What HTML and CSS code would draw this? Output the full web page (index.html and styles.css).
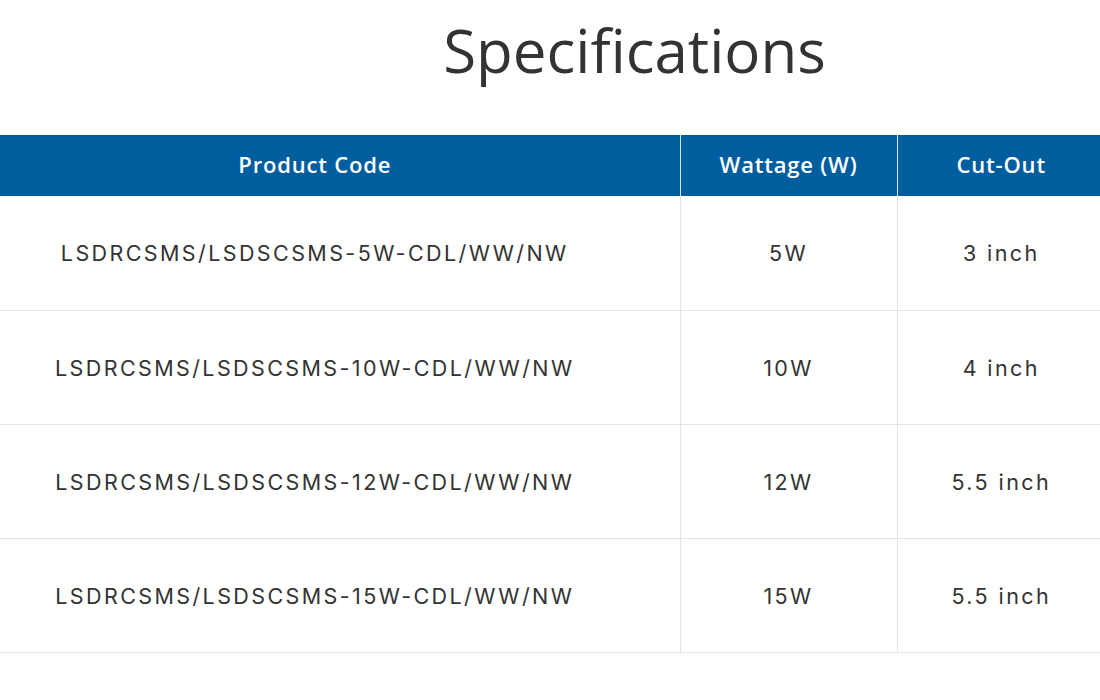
FILE: index.html
```html
<!DOCTYPE html>
<html>
<head>
<meta charset="utf-8">
<link rel="stylesheet" href="styles.css">
</head>
<body>
<div class="page">
  <h1 class="title">Specifications</h1>
  <table class="spec">
    <thead>
      <tr>
        <th class="c1">Product Code</th>
        <th class="c2">Wattage (W)</th>
        <th class="c3">Cut-Out</th>
      </tr>
    </thead>
    <tbody>
      <tr><td>LSDRCSMS/LSDSCSMS-5W-CDL/WW/NW</td><td>5W</td><td>3 inch</td></tr>
      <tr><td>LSDRCSMS/LSDSCSMS-10W-CDL/WW/NW</td><td>10W</td><td>4 inch</td></tr>
      <tr><td>LSDRCSMS/LSDSCSMS-12W-CDL/WW/NW</td><td>12W</td><td>5.5 inch</td></tr>
      <tr><td>LSDRCSMS/LSDSCSMS-15W-CDL/WW/NW</td><td>15W</td><td>5.5 inch</td></tr>
    </tbody>
  </table>
</div>
</body>
</html>
```
FILE: styles.css
```css
html, body {
  margin: 0;
  padding: 0;
  background: #ffffff;
  overflow: hidden;
}
.page {
  margin-left: -50px;
  width: 1155px;
  font-family: "Open Sans", "Liberation Sans", sans-serif;
  color: #333333;
}
.title {
  margin: 0;
  padding: 12px 0 0 214px;
  height: 135px;
  box-sizing: border-box;
  text-align: center;
  font-family: "Open Sans", "Liberation Sans", sans-serif;
  font-weight: 400;
  font-size: 60px;
  line-height: 76px;
  letter-spacing: 0;
  color: #333333;
}
.spec {
  width: 100%;
  border-collapse: collapse;
  table-layout: fixed;
}
.spec th {
  background: #005e9f;
  color: #ffffff;
  font-weight: 600;
  font-size: 22px;
  letter-spacing: 0.8px;
  height: 61px;
  padding: 0 0 3px 0;
  box-sizing: border-box;
  border-left: 1px solid #d6e3ee;
  text-align: center;
}
.spec th:first-child { border-left: none; }
.c1 { width: 730px; }
.c2 { width: 217px; }
.c3 { width: auto; }
.spec td {
  height: 113px;
  padding: 0;
  text-align: center;
  font-family: "Inter", "Open Sans", sans-serif;
  font-size: 21.5px;
  letter-spacing: 2.4px;
  color: #333333;
  border-bottom: 1px solid #e4e4e4;
  border-left: 1px solid #e4e4e4;
}
.spec tbody tr:first-child td { height: 114px; }
.spec td:first-child { border-left: none; }
```
